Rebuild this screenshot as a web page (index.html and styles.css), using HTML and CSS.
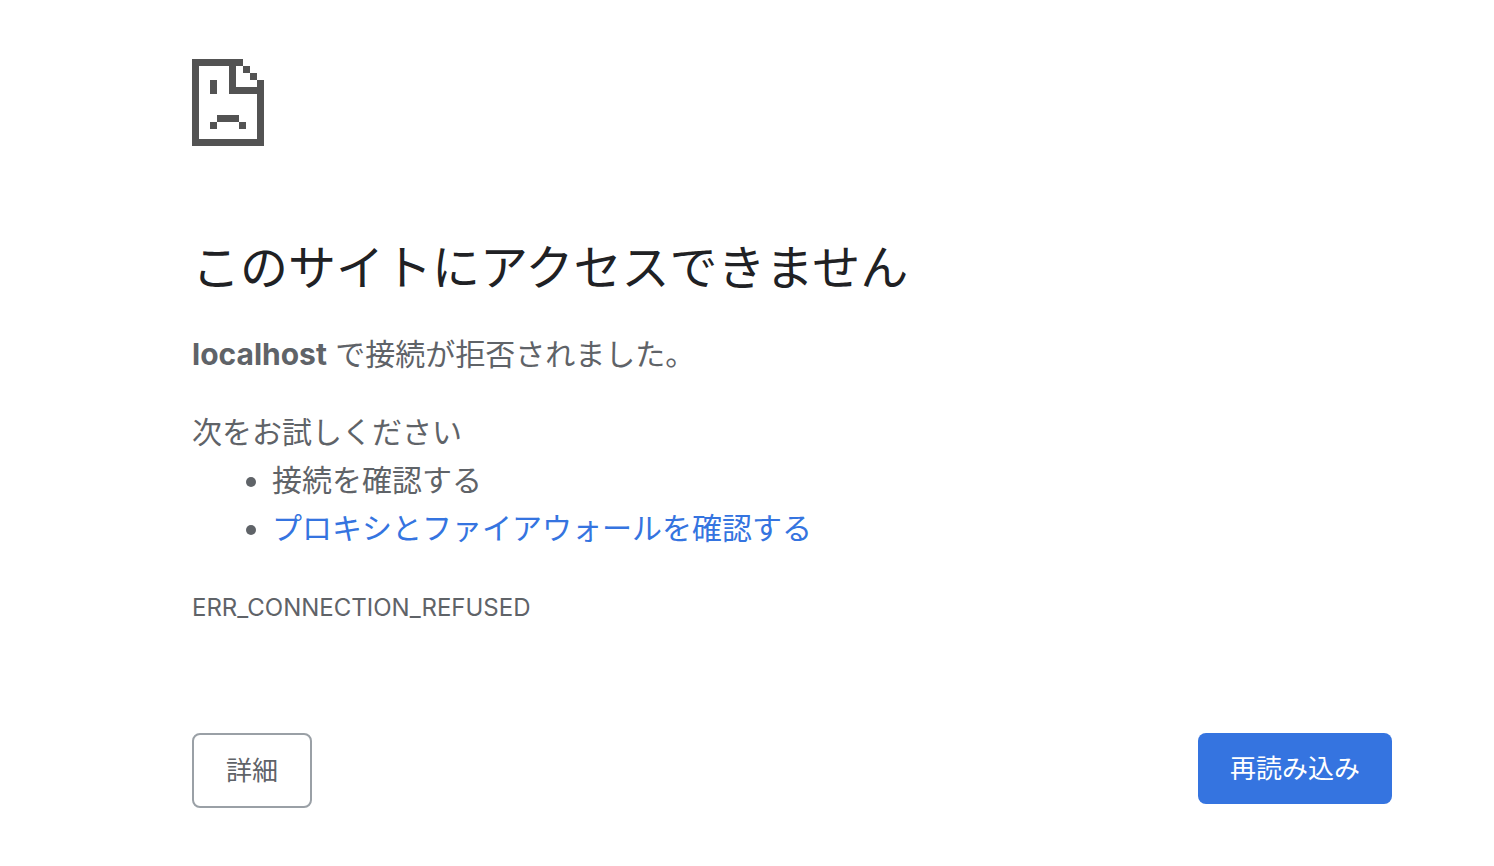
FILE: index.html
```html
<!DOCTYPE html>
<html lang="ja">
<head>
<meta charset="utf-8">
<meta name="viewport" content="width=device-width, initial-scale=1">
<title>localhost</title>
<link rel="stylesheet" href="styles.css">
</head>
<body>
<main class="error-page">
  <svg class="error-icon" viewBox="0 0 72 87" aria-hidden="true" shape-rendering="crispEdges">
    <path fill-rule="evenodd" d="M0 0H51V7H44V28H65V21H72V87H0ZM7 7V80H65V35H37V7Z"/>
    <path d="M51 7H58V14H51ZM58 14H65V21H58ZM18 21H25V35H18ZM25 56H47V63H25ZM18 63H25V70H18ZM47 63H54V70H47Z"/>
  </svg>
  <h1 class="title">このサイトにアクセスできません</h1>
  <p class="summary"><strong>localhost</strong> で接続が拒否されました。</p>
  <section class="suggestions">
    <p class="suggestions-title">次をお試しください</p>
    <ul class="suggestions-list">
      <li>接続を確認する</li>
      <li><a class="link" href="#firewall">プロキシとファイアウォールを確認する</a></li>
    </ul>
  </section>
  <p class="error-code">ERR_CONNECTION_REFUSED</p>
  <div class="actions">
    <button class="button details" type="button">詳細</button>
    <button class="button reload" type="button">再読み込み</button>
  </div>
</main>
</body>
</html>
```
FILE: styles.css
```css
body {
  margin: 0;
  background: #fff;
  color: #5f6368;
  font-family: Inter, "Noto Sans CJK JP", sans-serif;
  font-size: 30px;
  line-height: 48px;
}

.error-page {
  max-width: 1200px;
  margin: 0 102px 0 192px;
  padding-top: 59px;
}

.error-icon {
  display: block;
  width: 72px;
  height: 87px;
  fill: #535353;
}

.title {
  margin: 92px 0 32px;
  color: #202124;
  font-size: 48px;
  font-weight: 400;
  line-height: 60px;
}

.summary,
.suggestions-title,
.suggestions-list,
.error-code {
  margin: 0;
}

.suggestions {
  margin-top: 30px;
}

.suggestions-list {
  padding-left: 80px;
}

.link {
  color: #3574e0;
  text-decoration: none;
}

.error-code {
  margin-top: 32px;
  font-size: 24px;
}

.actions {
  display: flex;
  align-items: flex-start;
  justify-content: space-between;
  margin-top: 101px;
}

.button {
  box-sizing: border-box;
  border: 0;
  border-radius: 8px;
  padding: 16px 32px;
  font: inherit;
  font-size: 26px;
  line-height: 39px;
  cursor: pointer;
}

.details {
  border: 2px solid #9aa0a6;
  background: #fff;
  color: #5f6368;
}

.reload {
  background: #3574e0;
  color: #fff;
}
```
